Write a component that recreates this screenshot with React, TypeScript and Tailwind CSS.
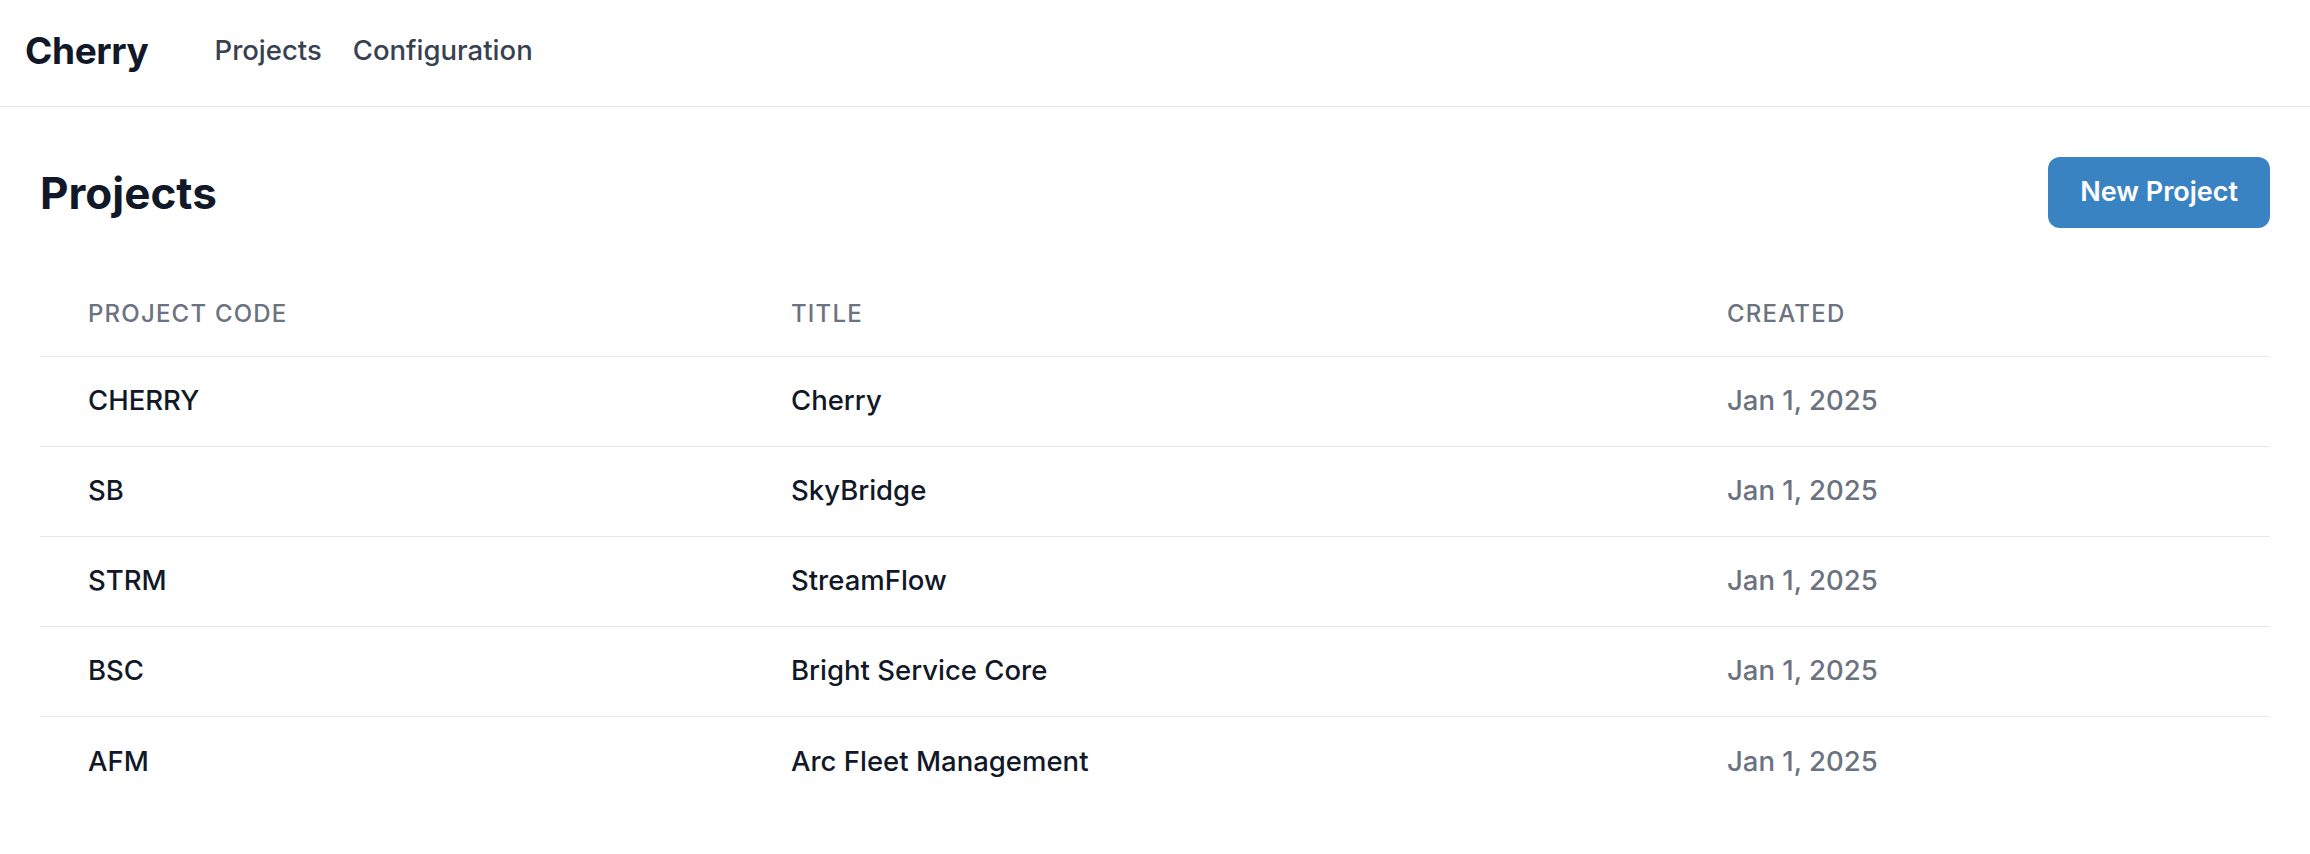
import React from 'react';

interface Project {
  code: string;
  title: string;
  created: string;
}

const projects: Project[] = [
  { code: 'CHERRY', title: 'Cherry', created: 'Jan 1, 2025' },
  { code: 'SB', title: 'SkyBridge', created: 'Jan 1, 2025' },
  { code: 'STRM', title: 'StreamFlow', created: 'Jan 1, 2025' },
  { code: 'BSC', title: 'Bright Service Core', created: 'Jan 1, 2025' },
  { code: 'AFM', title: 'Arc Fleet Management', created: 'Jan 1, 2025' },
];

const App: React.FC = () => {
  return (
    <div className="min-h-screen bg-white font-['Inter','Noto_Sans',sans-serif] antialiased">
      {/* Top nav */}
      <header className="h-[107px] flex items-center px-[25px] pb-[4px] border-b-[1.5px] border-[#e5e7eb]">
        <span className="text-[37px] font-bold text-[#111827] tracking-[-0.01em]">Cherry</span>
        <nav className="flex items-center gap-[31px] ml-[66px]">
          <a className="text-[27.5px] text-[#374151] font-medium">Projects</a>
          <a className="text-[27.5px] text-[#374151] font-medium">Configuration</a>
        </nav>
      </header>

      <main className="px-[40px] pt-[50px]">
        <div className="flex items-center justify-between">
          <h1 className="text-[44px] font-bold text-[#111827] leading-none">Projects</h1>
          <button className="h-[71px] px-[32px] rounded-[12px] bg-[#3a83c3] text-white text-[27px] font-semibold">
            New Project
          </button>
        </div>

        <table className="w-full mt-[44px] border-collapse table-fixed">
          <thead>
            <tr className="border-b-[1.5px] border-[#e5e7eb]">
              <th className="w-[703px] h-[84px] pl-[48px] text-left text-[24px] font-medium uppercase tracking-[0.05em] text-[#6b7280]">
                Project Code
              </th>
              <th className="w-[936px] pl-[48px] text-left text-[24px] font-medium uppercase tracking-[0.05em] text-[#6b7280]">
                Title
              </th>
              <th className="pl-[48px] text-left text-[24px] font-medium uppercase tracking-[0.05em] text-[#6b7280]">
                Created
              </th>
            </tr>
          </thead>
          <tbody>
            {projects.map((p, i) => (
              <tr
                key={p.code}
                className={i < projects.length - 1 ? 'border-b-[1.5px] border-[#e5e7eb]' : ''}
              >
                <td className="h-[90px] pl-[48px] text-[27.5px] font-medium text-[#111827]">{p.code}</td>
                <td className="pl-[48px] text-[27.5px] font-medium text-[#111827]">{p.title}</td>
                <td className="pl-[48px] text-[27.5px] font-medium text-[#6b7280]">{p.created}</td>
              </tr>
            ))}
          </tbody>
        </table>
      </main>
    </div>
  );
};

export default App;
